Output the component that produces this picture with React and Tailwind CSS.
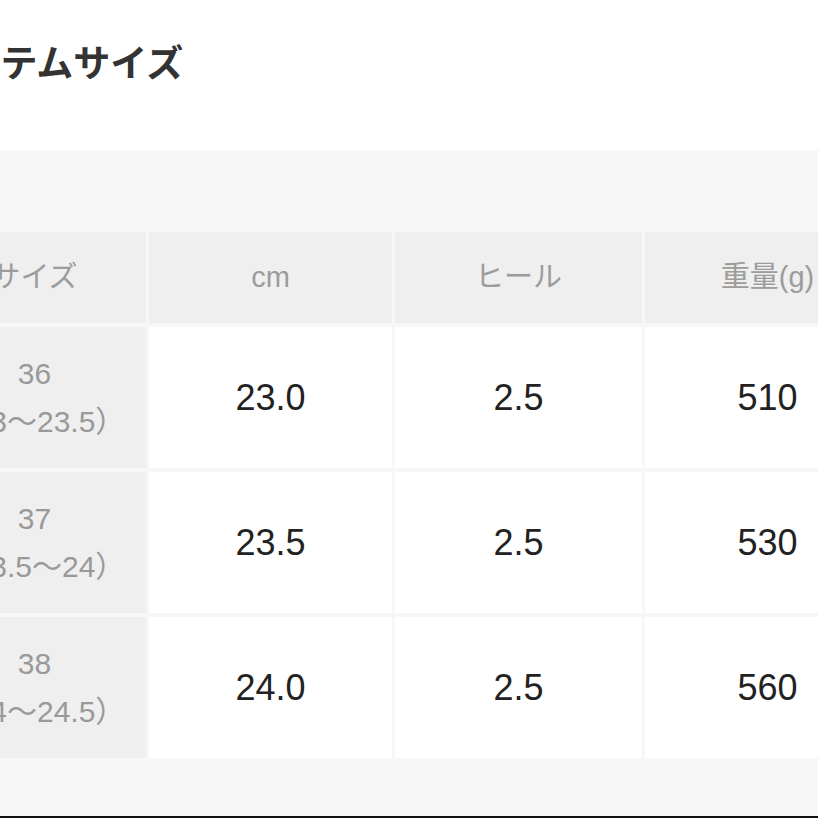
import React from 'react';

const rows = [
  { size: '36', range: '（23〜23.5）', cm: '23.0', heel: '2.5', weight: '510' },
  { size: '37', range: '（23.5〜24）', cm: '23.5', heel: '2.5', weight: '530' },
  { size: '38', range: '（24〜24.5）', cm: '24.0', heel: '2.5', weight: '560' },
];

const headers = ['cm', 'ヒール', '重量(g)'];

export default function App() {
  return (
    <div
      className="w-[818px] h-[818px] overflow-hidden bg-white"
      style={{ fontFamily: '"Liberation Sans", "Noto Sans CJK JP", sans-serif' }}
    >
      <div className="-ml-[77px] w-[1000px]">
        {/* Title */}
        <div className="h-[150px] pt-[40px] pl-[6px]">
          <h2 className="text-[37px] leading-[50px] font-bold text-[#333]">
            アイテムサイズ
          </h2>
        </div>

        {/* Size table panel */}
        <div className="h-[666px] bg-[#f7f7f7] pt-[82px]">
          <div className="grid grid-cols-[223px_243px_247px_245px] gap-x-[3px] gap-y-[4px]">
            <div className="h-[91px] bg-[#efefef] flex items-center justify-center text-[29px] text-[#9c9c9c]">
              サイズ
            </div>
            {headers.map((h) => (
              <div
                key={h}
                className="h-[91px] bg-[#efefef] flex items-center justify-center text-[29px] text-[#9c9c9c]"
              >
                {h}
              </div>
            ))}

            {rows.map((r) => (
              <React.Fragment key={r.size}>
                <div className="h-[141px] bg-[#efefef] flex flex-col items-center justify-center text-[30px] leading-[48px] text-[#999]">
                  <span>{r.size}</span>
                  <span>{r.range}</span>
                </div>
                <div className="h-[141px] bg-white flex items-center justify-center text-[36px] text-[#222]">
                  {r.cm}
                </div>
                <div className="h-[141px] bg-white flex items-center justify-center text-[36px] text-[#222]">
                  {r.heel}
                </div>
                <div className="h-[141px] bg-white flex items-center justify-center text-[36px] text-[#222]">
                  {r.weight}
                </div>
              </React.Fragment>
            ))}
          </div>
        </div>
        <div className="h-[2px] bg-[#111]" />
      </div>
    </div>
  );
}
